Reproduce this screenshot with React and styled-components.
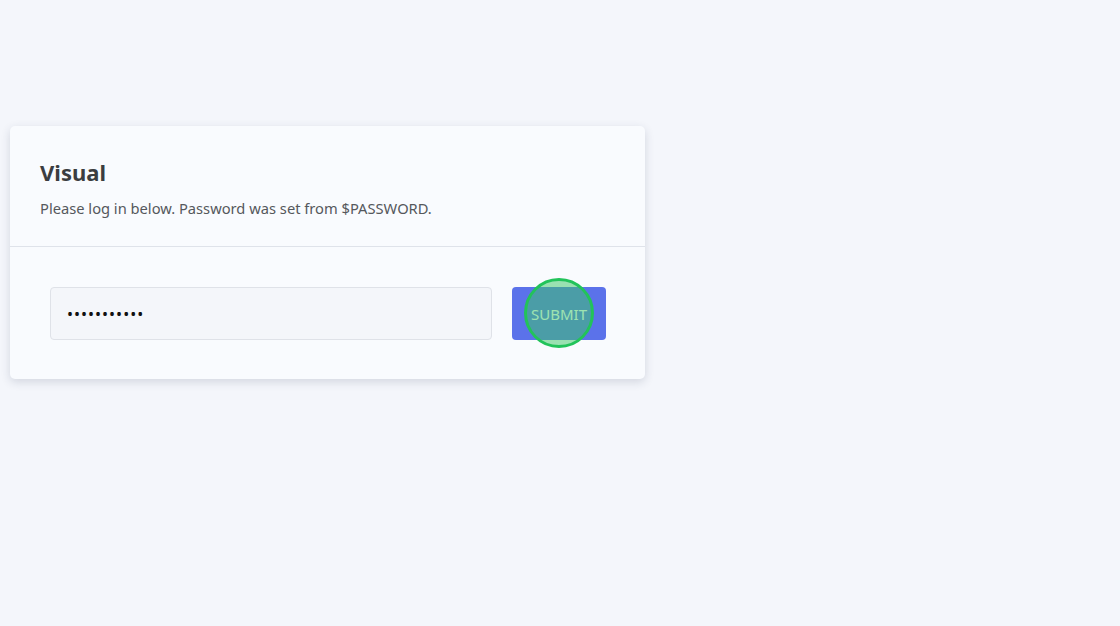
import React from 'react'
import styled, { createGlobalStyle } from 'styled-components';

const GlobalStyle = createGlobalStyle`
  html, body {
    margin: 0;
    padding: 0;
    background: #f4f6fb;
    font-family: "Noto Sans", "Open Sans", sans-serif;
  }
`;

function App() {
  return (
    <>
      <GlobalStyle />
      <Page>
        <Card>
          <CardHeader>
            <Title>Visual</Title>
            <Subtitle>Please log in below. Password was set from $PASSWORD.</Subtitle>
          </CardHeader>
          <CardBody>
            <PasswordInput type="password" defaultValue="secretsecre" readOnly />
            <ButtonWrap>
              <SubmitButton>SUBMIT</SubmitButton>
              <ClickMarker />
            </ButtonWrap>
          </CardBody>
        </Card>
      </Page>
    </>
  )
}

export default App;

const Page = styled.div`
  min-height: 626px;
  padding: 126px 0 0 10px;
  box-sizing: border-box;
`;

const Card = styled.div`
  width: 635px;
  background: #f9fbfe;
  border-radius: 5px;
  box-shadow: 0 3px 10px rgba(40, 50, 80, 0.16);
`;

const CardHeader = styled.div`
  padding: 31px 30px 26px;
  border-bottom: 1px solid #dfe3ea;
`;

const Title = styled.h2`
  margin: 0 0 9px;
  font-size: 22px;
  line-height: 30px;
  font-weight: 700;
  color: #3b3d40;
`;

const Subtitle = styled.p`
  margin: 0;
  font-size: 14.7px;
  line-height: 24px;
  color: #55585c;
`;

const CardBody = styled.div`
  display: flex;
  align-items: center;
  gap: 20px;
  padding: 40px 39px 39px 40px;
`;

const PasswordInput = styled.input`
  flex: 1;
  height: 53px;
  box-sizing: border-box;
  padding: 0 16px;
  border: 1px solid #dfe2e8;
  border-radius: 4px;
  background: #f4f6fa;
  font-size: 16px;
  color: #111;
  letter-spacing: 1px;
  outline: none;
  font-family: inherit;
`;

const ButtonWrap = styled.div`
  position: relative;
`;

const SubmitButton = styled.button`
  width: 94px;
  height: 53px;
  border: none;
  border-radius: 4px;
  background: #5b72ea;
  color: #ffffff;
  font-family: inherit;
  font-size: 15px;
  cursor: pointer;
`;

const ClickMarker = styled.div`
  position: absolute;
  left: 12px;
  top: -9px;
  width: 70px;
  height: 70px;
  box-sizing: border-box;
  border-radius: 50%;
  border: 3px solid #22c35a;
  background: rgba(60, 200, 100, 0.5);
  pointer-events: none;
`;
